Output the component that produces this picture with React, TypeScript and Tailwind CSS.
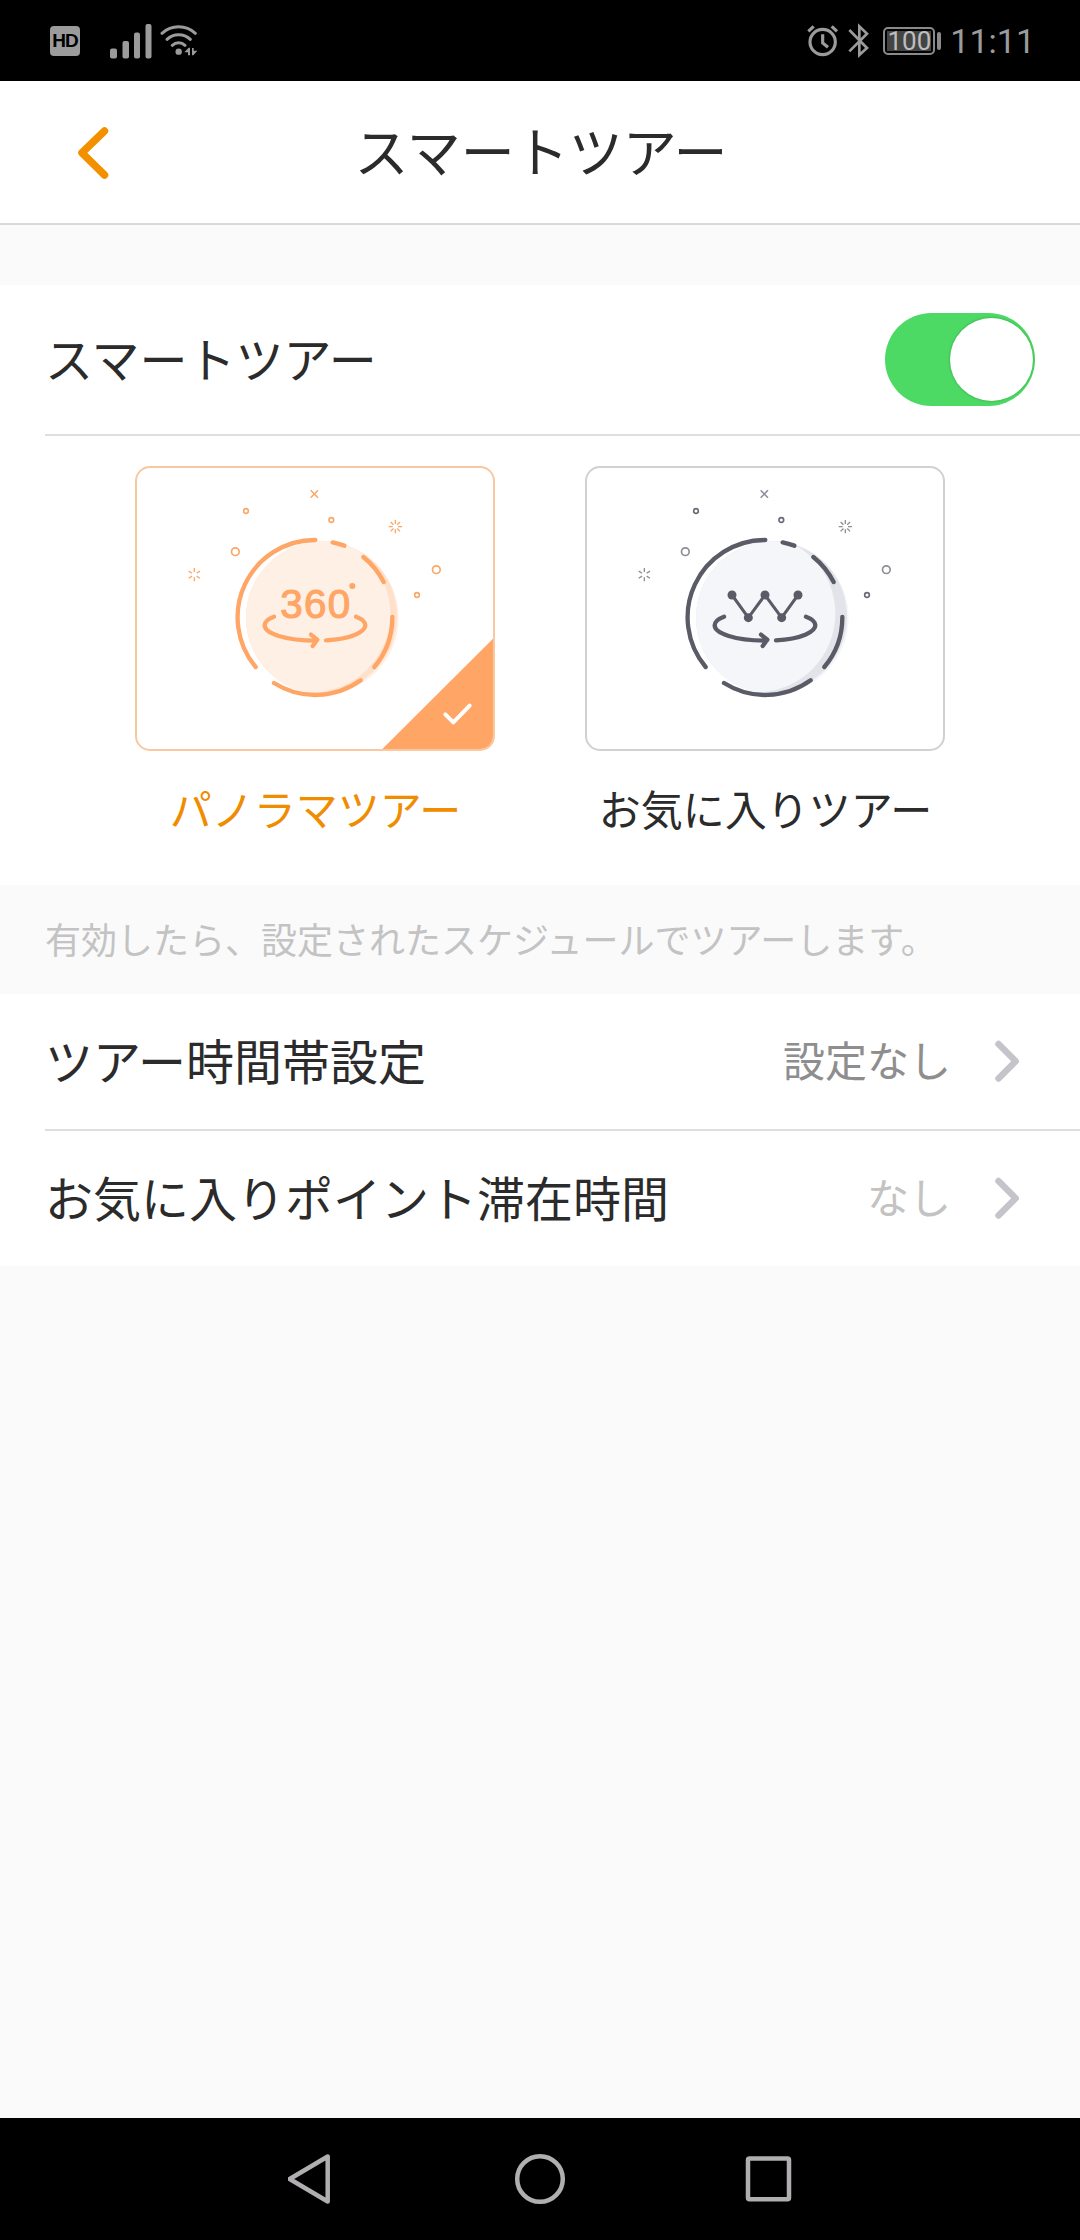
import React, { useState } from "react";

type TourMode = "panorama" | "favorite";

type Palette = {
  main: string;
  accent: string;
  ring: string;
  pale: string;
  shade: string;
  innerX: number;
};

const palettes: Record<TourMode, Palette> = {
  panorama: {
    main: "#ffa566",
    accent: "#f9a868",
    ring: "#f9a868",
    pale: "#fef0e5",
    shade: "#fee0cb",
    innerX: 560,
  },
  favorite: {
    main: "#5b5b68",
    accent: "#8e8e99",
    ring: "#6b6b76",
    pale: "#f4f6fa",
    shade: "#e3e4e9",
    innerX: 545,
  },
};

const StatusBar = () => {
  return (
    <div className="flex h-[81px] shrink-0 items-center justify-between bg-black pl-[50px] pr-[45px] text-[#9b9b9b]">
      <div className="flex items-center">
        <div className="flex size-[30px] items-center justify-center rounded-[4px] bg-[#9b9b9b] font-['Liberation_Sans',sans-serif] text-[19px] font-bold leading-none tracking-[-1px] text-black">
          HD
        </div>
        {/* Signal strength */}
        <svg className="ml-[30px]" width="42" height="36" viewBox="0 0 42 36" fill="currentColor">
          <rect x="0" y="25.5" width="7" height="10" rx="2" />
          <rect x="12.5" y="18" width="6.5" height="17.5" rx="2" />
          <rect x="24" y="9.500" width="6" height="26" rx="2" />
          <rect x="35.500" y="1" width="6" height="34.500" rx="2" />
        </svg>
        {/* Wifi */}
        <svg className="ml-[8px]" width="38" height="34" viewBox="390 72 114 102" fill="none" stroke="currentColor" strokeWidth="9" strokeLinecap="round">
          <path d="M396 100a74 74 0 0 1 100 0M411 118a51 51 0 0 1 70 0M427 136a28 28 0 0 1 38 0" />
          <circle cx="446" cy="155" r="9.500" fill="currentColor" stroke="none" />
          <path d="M463 157L476 143H480V166H474V157ZM486 166V144H491V152H502L490 166Z" fill="currentColor" stroke="none" />
        </svg>
      </div>
      <div className="flex items-center">
        {/* Alarm */}
        <svg width="32" height="34" viewBox="49 71 96 102" fill="none" stroke="currentColor" strokeWidth="9.500">
          <circle cx="96" cy="125" r="38" />
          <path d="M96 102V128L112 141M53 93L69 78M123 78L139 93" />
        </svg>
        {/* Bluetooth */}
        <svg className="ml-[9px]" width="22" height="36" viewBox="174 67 66 108" fill="none" stroke="currentColor" strokeWidth="8">
          <path d="M178 88L231 142L208 163V77L231 99L178 152" />
        </svg>
        {/* Battery */}
        <div className="ml-[13px] flex items-center">
          <div className="flex h-[28px] w-[52px] rounded-[5px] border-2 border-[#8a8a8a] p-[2px]">
            <div className="flex flex-1 items-center justify-center bg-[#444444] font-['Roboto',sans-serif] text-[26px] leading-none text-[#bdbdbd]">
              100
            </div>
          </div>
          <div className="ml-[2px] h-[18px] w-[4px] rounded-[2px] bg-[#8a8a8a]" />
        </div>
        <span className="ml-[9px] font-['Roboto',sans-serif] text-[34px] leading-none">11:11</span>
      </div>
    </div>
  );
};

const Header = () => {
  return (
    <header className="grid h-[144px] shrink-0 grid-cols-[1fr_auto_1fr] items-center border-b-2 border-[#d9d9d9] bg-white">
      <button className="ml-[76px] mt-px w-fit" aria-label="戻る">
        <svg width="36" height="54" viewBox="76 126 36 54" fill="none" stroke="#f39000" strokeWidth="7.500" strokeLinecap="round" strokeLinejoin="round">
          <path d="M104.500 131L82 152.800L104.500 175" />
        </svg>
      </button>
      <h1 className="pb-1 pl-0.5 text-[54px] leading-none">スマートツアー</h1>
    </header>
  );
};

const Spark = ({ x, y, angles, color }: { x: number; y: number; angles: number[]; color: string }) => {
  return (
    <g stroke={color} strokeWidth="4">
      {angles.map((angle) => (
        <path key={angle} d={`M${x} ${y - 8}V${y - 20}`} transform={`rotate(${angle} ${x} ${y})`} />
      ))}
    </g>
  );
};

const TourArt = ({ mode, selected }: { mode: TourMode; selected: boolean }) => {
  const p = palettes[mode];

  return (
    <svg className="block size-full" viewBox="36 39 1068 843" fill="none">
      <defs>
        <clipPath id={`disc-${mode}`}>
          <circle cx="592" cy="488" r="229" />
        </clipPath>
      </defs>

      {/* Disc with its shaded edge */}
      <circle cx="592" cy="488" r="229" fill={p.pale} />
      <g clipPath={`url(#disc-${mode})`}>
        <circle cx="587" cy="484" r="229" fill={p.shade} />
        <circle cx={p.innerX} cy="476" r="236" fill={p.pale} />
      </g>

      {/* Broken ring */}
      <path
        d="M392 636A232 232 0 0 1 571 255M623 262Q641 266 658 272M715 306A232 232 0 0 1 776 381M802 486A232 232 0 0 1 748 636M707 676A232 232 0 0 1 447 684"
        stroke={p.main}
        strokeWidth="13"
        strokeLinecap="round"
      />

      {/* Rotation arrow */}
      <path
        d="M447 485C425 493 419 503 419 511C419 535 480 557 574 557M693 485C715 493 721 503 721 511C721 530 680 552 603 556M558 539L577 554L563 573"
        stroke={p.main}
        strokeWidth="13"
        strokeLinecap="round"
        strokeLinejoin="round"
      />

      {mode === "panorama" ? (
        <g fill={p.main}>
          <text
            x="573"
            y="490"
            textAnchor="middle"
            fontFamily="Liberation Sans, sans-serif"
            fontSize="121"
            letterSpacing="4"
            stroke={p.main}
            strokeWidth="3.500"
          >
            360
          </text>
          <circle cx="682" cy="393" r="9" />
        </g>
      ) : (
        <g fill={p.main}>
          <path d="M471 420L520 488L570 420L620 488L669 420" fill="none" stroke={p.main} strokeWidth="9" />
          <circle cx="471" cy="420" r="13.500" />
          <circle cx="520" cy="488" r="13.500" />
          <circle cx="570" cy="420" r="13.500" />
          <circle cx="620" cy="488" r="13.500" />
          <circle cx="669" cy="420" r="13.500" />
        </g>
      )}

      {/* Stars around the disc */}
      <path d="M557 106L579 128M579 106L557 128" stroke={p.accent} strokeWidth="4.500" />
      <g stroke={p.ring} strokeWidth="5">
        <circle cx="363" cy="168" r="7" />
        <circle cx="619" cy="195" r="7" />
        <circle cx="876" cy="420" r="7" />
      </g>
      <g stroke={p.accent} strokeWidth="5">
        <circle cx="331" cy="290" r="11.500" />
        <circle cx="934" cy="344" r="11.500" />
      </g>
      <Spark x={208} y={359} angles={[0, 58, 122, 180, 238, 302]} color={p.accent} />
      <Spark x={811} y={215} angles={[0, 45, 90, 135, 180, 225, 270, 315]} color={p.accent} />

      {selected && (
        <g>
          <path d="M1110 545V888H766Z" fill="#ffa566" />
          <path d="M961 778L985 802L1034 752" stroke="#ffffff" strokeWidth="12" strokeLinecap="round" strokeLinejoin="round" />
        </g>
      )}
    </svg>
  );
};

type TourCardProps = {
  mode: TourMode;
  label: string;
  selected: boolean;
  onSelect: () => void;
};

const TourCard = ({ mode, label, selected, onSelect }: TourCardProps) => {
  return (
    <button className="flex w-[360px] flex-col items-center" onClick={onSelect}>
      <div
        className={`h-[285px] w-full overflow-hidden rounded-[15px] border-2 ${
          selected ? "border-[#f8c8a0]" : "border-[#d0d0d5]"
        }`}
      >
        <TourArt mode={mode} selected={selected} />
      </div>
      <span
        className={`mt-[36px] whitespace-nowrap pl-px text-[42px] leading-[42px] ${
          selected ? "text-[#f08c00]" : "text-[#2b2b2b]"
        }`}
      >
        {label}
      </span>
    </button>
  );
};

const Switch = ({ on, onToggle }: { on: boolean; onToggle: () => void }) => {
  return (
    <button
      role="switch"
      aria-checked={on}
      onClick={onToggle}
      className={`flex h-[93px] w-[150px] items-center rounded-full px-[2px] ${
        on ? "justify-end bg-[#4cd964]" : "justify-start bg-[#e5e5e5]"
      }`}
    >
      <span className="size-[83px] rounded-full bg-white shadow-[0_0_2px_1px_rgba(0,0,0,0.12)]" />
    </button>
  );
};

const SettingRow = ({ title, value, valueColor }: { title: string; value: string; valueColor: string }) => {
  return (
    <div className="flex h-[135px] items-center pr-[57px]">
      <span className="flex-1 pb-1.5 text-[48px] leading-none">{title}</span>
      <span className={`pb-[5px] text-[42px] leading-none ${valueColor}`}>{value}</span>
      <svg
        className="ml-[42px]"
        width="30"
        height="46"
        viewBox="0 0 30 46"
        fill="none"
        stroke="#c5c4cb"
        strokeWidth="6.500"
        strokeLinecap="round"
        strokeLinejoin="round"
      >
        <path d="M5.500 5L22.700 22.300L5.500 39.500" />
      </svg>
    </div>
  );
};

const NavigationBar = () => {
  return (
    <nav className="flex h-[122px] shrink-0 items-center justify-center bg-black text-[#b0aeb0]">
      <svg width="504" height="52" viewBox="288 2153 504 52" fill="none" stroke="currentColor" strokeWidth="4.500" strokeLinejoin="round">
        <path d="M327.700 2156.500V2201.500L289.700 2179Z" />
        <circle cx="540" cy="2179" r="22.800" />
        <rect x="748" y="2158.500" width="41" height="40.800" rx="1.500" />
      </svg>
    </nav>
  );
};

const App = () => {
  const [enabled, setEnabled] = useState(true);
  const [mode, setMode] = useState<TourMode>("panorama");

  return (
    <div className="flex h-[2240px] w-[1080px] flex-col bg-[#fafafa] font-['Noto_Sans_CJK_JP',sans-serif] text-[#2b2b2b]">
      <StatusBar />
      <Header />

      <main className="flex-1">
        {/* Tour switch and mode */}
        <section className="mt-[60px] bg-white">
          <div className="ml-[45px] flex h-[151px] items-center justify-between border-b-2 border-[#dedede] pr-[45px]">
            <span className="pb-1.5 text-[48px] leading-none">スマートツアー</span>
            <Switch on={enabled} onToggle={() => setEnabled(!enabled)} />
          </div>
          <div className="flex h-[449px] justify-center gap-[90px] pt-[30px]">
            <TourCard
              mode="panorama"
              label="パノラマツアー"
              selected={mode === "panorama"}
              onSelect={() => setMode("panorama")}
            />
            <TourCard
              mode="favorite"
              label="お気に入りツアー"
              selected={mode === "favorite"}
              onSelect={() => setMode("favorite")}
            />
          </div>
        </section>

        <p className="flex h-[109px] items-center pb-1 pl-[45px] text-[36px] leading-none text-[#c3c3c3]">
          有効したら、設定されたスケジュールでツアーします。
        </p>

        {/* Schedule settings */}
        <section className="bg-white pl-[45px]">
          <SettingRow title="ツアー時間帯設定" value="設定なし" valueColor="text-[#8e8e8e]" />
          <div className="h-[2px] bg-[#dedede]" />
          <SettingRow title="お気に入りポイント滞在時間" value="なし" valueColor="text-[#c3c3c3]" />
        </section>
      </main>

      <NavigationBar />
    </div>
  );
};

export default App;
